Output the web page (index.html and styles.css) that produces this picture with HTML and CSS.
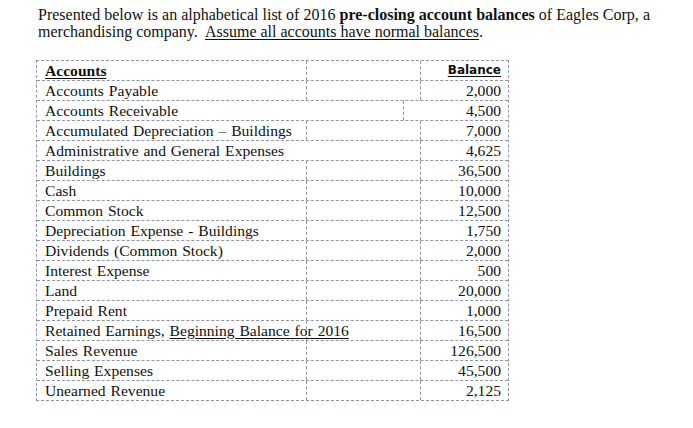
FILE: index.html
```html
<!DOCTYPE html>
<html>
<head>
<meta charset="utf-8">
<link rel="stylesheet" href="styles.css">
</head>
<body>
<div class="intro">
  <div class="line1">Presented below is an alphabetical list of 2016 <b>pre-closing account balances</b> of Eagles Corp, a</div>
  <div class="line2">merchandising company.&nbsp; <u>Assume all accounts have normal balances</u>.</div>
</div>
<div class="ledger">
  <div class="row"><div class="acct hdr"><u>Accounts</u></div><div class="mid"></div><div class="bal balhdr"><u>Balance</u></div></div>
  <div class="row"><div class="acct">Accounts Payable</div><div class="mid"></div><div class="bal">2,000</div></div>
  <div class="row"><div class="acct wide">Accounts Receivable</div><div class="bal">4,500</div></div>
  <div class="row"><div class="acct">Accumulated Depreciation – Buildings</div><div class="mid"></div><div class="bal">7,000</div></div>
  <div class="row"><div class="acct open">Administrative and General Expenses</div><div class="mid"></div><div class="bal">4,625</div></div>
  <div class="row"><div class="acct">Buildings</div><div class="mid"></div><div class="bal">36,500</div></div>
  <div class="row"><div class="acct">Cash</div><div class="mid"></div><div class="bal">10,000</div></div>
  <div class="row"><div class="acct">Common Stock</div><div class="mid"></div><div class="bal">12,500</div></div>
  <div class="row"><div class="acct">Depreciation Expense - Buildings</div><div class="mid"></div><div class="bal">1,750</div></div>
  <div class="row"><div class="acct">Dividends (Common Stock)</div><div class="mid"></div><div class="bal">2,000</div></div>
  <div class="row"><div class="acct">Interest Expense</div><div class="mid"></div><div class="bal">500</div></div>
  <div class="row"><div class="acct">Land</div><div class="mid"></div><div class="bal">20,000</div></div>
  <div class="row"><div class="acct">Prepaid Rent</div><div class="mid"></div><div class="bal">1,000</div></div>
  <div class="row"><div class="acct over">Retained Earnings, <u>Beginning Balance for 2016</u></div><div class="mid"></div><div class="bal">16,500</div></div>
  <div class="row"><div class="acct">Sales Revenue</div><div class="mid"></div><div class="bal">126,500</div></div>
  <div class="row"><div class="acct">Selling Expenses</div><div class="mid"></div><div class="bal">45,500</div></div>
  <div class="row"><div class="acct">Unearned Revenue</div><div class="mid"></div><div class="bal">2,125</div></div>
</div>
</body>
</html>
```
FILE: styles.css
```css
html, body {
  margin: 0;
  padding: 0;
  background: #ffffff;
}
body {
  font-family: "Liberation Serif", "Times New Roman", serif;
  color: #111;
}
.intro {
  padding: 6px 0 0 38px;
  font-size: 16px;
  line-height: 17px;
}
.line1 {
  width: 612px;
  text-align: justify;
  text-align-last: justify;
}
.line2 u, .hdr u, .balhdr u, .over u {
  text-underline-offset: 2px;
}
.ledger {
  box-sizing: border-box;
  margin: 20px 0 0 36px;
  width: 473px;
  border: 1px dashed #8f959e;
}
.row {
  box-sizing: border-box;
  display: flex;
  height: 20px;
  border-bottom: 1px dashed #8f959e;
  font-size: 15.6px;
  line-height: 19px;
  word-spacing: 1px;
}
.row:last-child {
  border-bottom: none;
  height: 19px;
}
.acct {
  box-sizing: border-box;
  width: 270px;
  flex: none;
  padding-left: 8px;
  border-right: 1px dashed #8f959e;
  white-space: nowrap;
}
.acct.wide {
  width: 367px;
}
.acct.open {
  border-right-color: transparent;
}
.mid {
  box-sizing: border-box;
  width: 114px;
  flex: none;
  border-right: 1px dashed #8f959e;
}
.bal {
  flex: 1;
  text-align: right;
  padding-right: 7px;
}
.hdr {
  font-weight: bold;
}
.balhdr {
  font-family: "DejaVu Sans", Verdana, sans-serif;
  font-weight: bold;
  font-size: 12px;
  word-spacing: 0;
}
```
